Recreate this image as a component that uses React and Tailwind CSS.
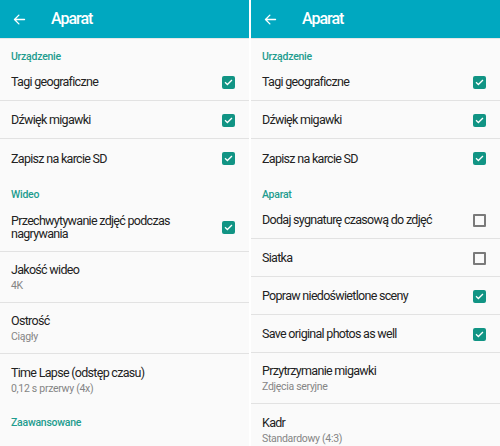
import React from "react";

function Check({ checked }) {
  if (checked) {
    return (
      <div className="w-[13px] h-[13px] shrink-0 rounded-[2px] bg-[#119484] flex items-center justify-center">
        <svg width="9" height="9" viewBox="0 0 24 24" fill="none" stroke="white" strokeWidth="3.5" strokeLinecap="square">
          <path d="M4 12.5l5 5L20 6.5" />
        </svg>
      </div>
    );
  }
  return <div className="w-[13px] h-[13px] shrink-0 rounded-[1px] border-2 border-[#7a7a7a]" />;
}

function Section({ title }) {
  return (
    <div className="h-[24px] shrink-0 flex items-end pl-[11px]">
      <div className="text-[10.5px] leading-[12px] font-medium tracking-[-0.25px] text-[#1e9c8e]">{title}</div>
    </div>
  );
}

function Row({ title, sub, check, divider = true }) {
  return (
    <div className={`${sub ? "h-[51px]" : "h-[38px]"} shrink-0 flex items-center pl-[11px] pr-[14px] pt-[1px] ${divider ? "border-b border-[#e2e2e2]" : ""}`}>
      <div className="flex-1 min-w-0 pr-4">
        <div className="text-[12.5px] leading-[14px] tracking-[-0.7px] text-[#222]">{title}</div>
        {sub && <div className="text-[10.5px] leading-[12px] tracking-[-0.3px] mt-[3px] text-[#858585]">{sub}</div>}
      </div>
      {check !== undefined && <Check checked={check} />}
    </div>
  );
}

function Header() {
  return (
    <div className="h-[39px] shrink-0 bg-[#00a8c0] flex items-center border-b border-[#e6e6e6] relative z-10">
      <svg className="ml-[12px]" width="15" height="15" viewBox="0 0 24 24" fill="none" stroke="white" strokeWidth="2.2" strokeLinecap="round" strokeLinejoin="round">
        <path d="M20 12H4M11 5l-7 7 7 7" />
      </svg>
      <div className="ml-[24px] text-white text-[16px] font-medium tracking-[-1px]">Aparat</div>
    </div>
  );
}

export default function App() {
  return (
    <div className="w-[500px] h-[446px] overflow-hidden flex bg-white" style={{ fontFamily: "Roboto, 'Noto Sans', sans-serif" }}>
      <div className="w-[249px] h-full bg-[#fafafa] flex flex-col overflow-hidden">
        <Header />
        <Section title="Urządzenie" />
        <Row title="Tagi geograficzne" check={true} />
        <Row title="Dźwięk migawki" check={true} />
        <Row title="Zapisz na karcie SD" check={true} divider={false} />
        <Section title="Wideo" />
        <div className="h-[51px] shrink-0 flex items-center pl-[11px] pr-[14px] pt-[2px] border-b border-[#e2e2e2]">
          <div className="flex-1 pr-4 text-[12.5px] leading-[13px] tracking-[-0.7px] text-[#222]">
            Przechwytywanie zdjęć podczas nagrywania
          </div>
          <Check checked={true} />
        </div>
        <Row title="Jakość wideo" sub="4K" />
        <Row title="Ostrość" sub="Ciągły" />
        <Row title="Time Lapse (odstęp czasu)" sub="0,12 s przerwy (4x)" divider={false} />
        <Section title="Zaawansowane" />
      </div>
      <div className="w-[2px] shrink-0 bg-white" />
      <div className="flex-1 h-full bg-[#fafafa] flex flex-col overflow-hidden">
        <Header />
        <Section title="Urządzenie" />
        <Row title="Tagi geograficzne" check={true} />
        <Row title="Dźwięk migawki" check={true} />
        <Row title="Zapisz na karcie SD" check={true} divider={false} />
        <Section title="Aparat" />
        <Row title="Dodaj sygnaturę czasową do zdjęć" check={false} />
        <Row title="Siatka" check={false} />
        <Row title="Popraw niedoświetlone sceny" check={true} />
        <Row title="Save original photos as well" check={true} />
        <Row title="Przytrzymanie migawki" sub="Zdjęcia seryjne" />
        <Row title="Kadr" sub="Standardowy (4:3)" divider={false} />
      </div>
    </div>
  );
}
